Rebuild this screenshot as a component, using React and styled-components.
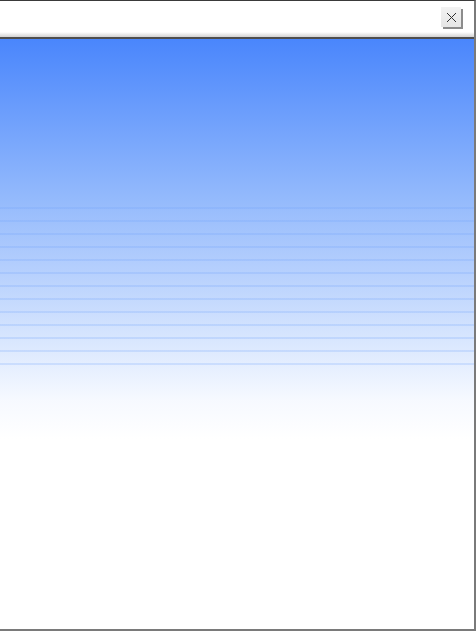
import React from "react";
import styled, { createGlobalStyle } from "styled-components";

const Global = createGlobalStyle`
  html, body { margin: 0; padding: 0; background: #ffffff; }
  body { font-family: "Liberation Sans", Arial, sans-serif; }
`;

const Window = styled.div`
  width: 476px;
  height: 631px;
  box-sizing: border-box;
  border-top: 1px solid #3a3a3a;
  border-right: 2px solid #7a7a7a;
  border-bottom: 2px solid #7a7a7a;
  display: flex;
  flex-direction: column;
  overflow: hidden;
`;

const TitleBar = styled.div`
  height: 38px;
  flex: none;
  display: flex;
  align-items: flex-start;
  justify-content: flex-end;
  padding: 6px 13px 0 0;
  box-sizing: border-box;
  background: linear-gradient(to bottom, #ffffff 0, #ffffff 31px, #d2d2d2 36px);
  border-bottom: 2px solid #4e4e4e;
`;

const CloseButton = styled.button`
  width: 20px;
  height: 20px;
  padding: 0;
  margin: 0;
  border: none;
  background: linear-gradient(to bottom, #f2f2f2, #e6e6e6);
  box-shadow: 2px 2px 0 #8c8c8c;
  display: flex;
  align-items: center;
  justify-content: center;
  cursor: pointer;
`;

const Content = styled.div`
  flex: 1;
  background:
    repeating-linear-gradient(
      to bottom,
      rgba(110, 160, 250, 0.22) 0px,
      rgba(110, 160, 250, 0.22) 2px,
      transparent 2px,
      transparent 13px
    ) 0 168px / 100% 158px no-repeat,
    linear-gradient(
      to bottom,
      #4a86fc 0px,
      #6fa0fc 80px,
      #94bafc 160px,
      #b5cffd 230px,
      #d8e6fe 300px,
      #f6f9ff 360px,
      #ffffff 400px
    );
`;

export default function App() {
  return (
    <>
      <Global />
      <Window>
        <TitleBar>
          <CloseButton aria-label="Close">
            <svg width="11" height="11" viewBox="0 0 11 11">
              <path d="M1 1 L10 10 M10 1 L1 10" stroke="#333" strokeWidth="1" fill="none" />
            </svg>
          </CloseButton>
        </TitleBar>
        <Content />
      </Window>
    </>
  );
}
